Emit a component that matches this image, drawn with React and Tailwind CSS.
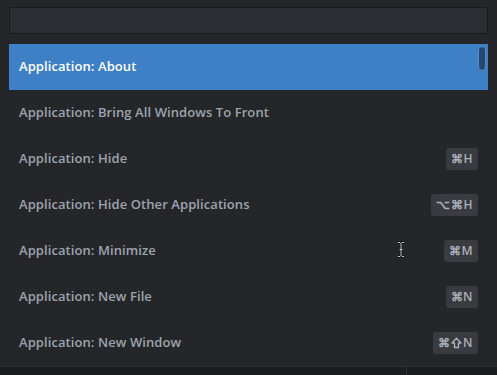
import React from "react";

const Shift = () => (
  <svg width="11" height="12" viewBox="0 0 11 12" className="mx-[1px]">
    <path d="M5.5 1.2 L10 6 H7.5 V10.5 H3.5 V6 H1 Z" fill="none" stroke="currentColor" strokeWidth="1.4" strokeLinejoin="round" />
  </svg>
);

const commands = [
  { name: "Application: About", keys: null },
  { name: "Application: Bring All Windows To Front", keys: null },
  { name: "Application: Hide", keys: ["⌘", "H"] },
  { name: "Application: Hide Other Applications", keys: ["⌥", "⌘", "H"] },
  { name: "Application: Minimize", keys: ["⌘", "M"] },
  { name: "Application: New File", keys: ["⌘", "N"] },
  { name: "Application: New Window", keys: ["⌘", "shift", "N"] },
];

const IBeam = () => (
  <svg width="10" height="17" viewBox="0 0 10 17" className="absolute left-[396px] top-[241px]">
    <path d="M2 1.5h2l1 1 1-1h2M5 2.5v12M2 15.5h2l1-1 1 1h2M3.5 8.5h3" fill="none" stroke="#111" strokeWidth="2.4" />
    <path d="M2 1.5h2l1 1 1-1h2M5 2.5v12M2 15.5h2l1-1 1 1h2M3.5 8.5h3" fill="none" stroke="#d8d8d8" strokeWidth="0.9" />
  </svg>
);

export default function App() {
  return (
    <div
      className="relative w-[497px] h-[375px] overflow-hidden bg-[#25262a] flex flex-col"
      style={{ fontFamily: '"Open Sans", "Liberation Sans", sans-serif' }}
    >
      <div className="px-[9px] pt-[7px]">
        <div className="h-[27px] bg-[#2c2d32] border border-[#18191b] rounded-[2px]" />
      </div>

      <div className="relative mx-[9px] mt-[10px] flex-1">
        {commands.map((c, i) => (
          <div
            key={c.name}
            className={`h-[46px] flex items-center justify-between pl-[10px] pr-[10px] text-[13px] font-semibold tracking-[0.08px] ${
              i === 0 ? "bg-[#3d80c6] text-white" : "text-[#9da3ad]"
            }`}
          >
            <span>{c.name}</span>
            {c.keys && (
              <span className="h-[22px] px-[5px] flex items-center rounded-[3px] bg-[#393b40] text-[#a9afb8] text-[12px] font-semibold tracking-[0.5px]">
                {c.keys.map((k, j) => (k === "shift" ? <Shift key={j} /> : <span key={j}>{k}</span>))}
              </span>
            )}
          </div>
        ))}
        <div className="absolute right-[2px] top-[2px] w-[8px] h-[25px] rounded-full bg-[#24476f] border border-[#5a8cc4]" />
      </div>

      <div className="h-[9px] border-t border-[#303135] bg-[#1c1d1f] flex">
        <div className="w-[407px] border-r border-[#303135]" />
      </div>

      <IBeam />
    </div>
  );
}
